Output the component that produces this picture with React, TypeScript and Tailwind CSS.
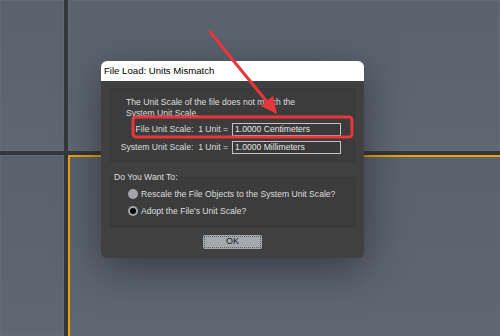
import React from 'react';

const font = { fontFamily: '"Liberation Sans", Arial, sans-serif' };

const Viewport = ({ active = false }: { active?: boolean }) => (
  <div
    className={
      'bg-gradient-to-b from-[#5a626d] to-[#5f6773] ' +
      (active ? 'border-l-2 border-t-2 border-[#eea10c]' : 'border border-[#636b76]')
    }
  />
);

const UnitRow = ({ label, value }: { label: string; value: string }) => (
  <div className="flex h-[13px] items-center">
    <span className="w-[117px] text-right whitespace-pre">{label}</span>
    <div className="ml-[4px] flex h-[13px] w-[109px] items-center border border-[#c4c4c4] bg-[#393939] pl-[2px] text-[#e6e6e6]">
      {value}
    </div>
  </div>
);

const Radio = ({ checked, label }: { checked: boolean; label: string }) => (
  <div className="flex h-[12px] items-center">
    {checked ? (
      <span className="flex h-[10px] w-[10px] items-center justify-center rounded-full bg-[#a2a4a7]">
        <span className="h-[6px] w-[6px] rounded-full bg-black" />
      </span>
    ) : (
      <span className="h-[10px] w-[10px] rounded-full bg-[#a2a4a7]" />
    )}
    <span className="ml-[3px] whitespace-nowrap">{label}</span>
  </div>
);

const Dialog = () => (
  <div
    className="absolute left-[101px] top-[61px] w-[263px] rounded-[6px] bg-[#404040] text-[8.6px] text-[#dedede] shadow-[0_10px_40px_rgba(20,24,30,0.55)]"
    style={font}
  >
    <div className="flex h-[20px] items-center rounded-t-[6px] bg-white px-[3px] text-[9.6px] text-black">
      File Load: Units Mismatch
    </div>
    <div className="px-[9px] pb-[9px] pt-[7px]">
      <div className="border border-[#383838] bg-[#3c3c3c] pb-[7px] pt-[8px]">
        <p className="pl-[15px] leading-[10.5px]">
          The Unit Scale of the file does not match the
          <br />
          System Unit Scale.
        </p>
        <div className="mt-[5px] flex flex-col gap-[5px]">
          <UnitRow label="File Unit Scale:  1 Unit =" value="1.0000 Centimeters" />
          <UnitRow label="System Unit Scale:  1 Unit =" value="1.0000 Millimeters" />
        </div>
      </div>
      <fieldset className="mt-[10px] border border-[#383838] bg-[#3c3c3c] pb-[9px] pl-[17px]">
        <legend className="-ml-[15px] px-[1px] leading-[10px]">Do You Want To:</legend>
        <div className="mt-[6px] flex flex-col gap-[5px]">
          <Radio checked={false} label="Rescale the File Objects to the System Unit Scale?" />
          <Radio checked label="Adopt the File's Unit Scale?" />
        </div>
      </fieldset>
      <div className="mt-[8px] flex justify-center">
        <button className="flex h-[14px] w-[59px] items-center justify-center rounded-[2px] bg-[#a4a9ae] p-[1px] text-[9px] text-[#1a1a1a]">
          <span className="flex h-full w-full items-center justify-center border border-dotted border-[#5a5e62]">
            OK
          </span>
        </button>
      </div>
    </div>
  </div>
);

const Annotation = () => (
  <svg className="pointer-events-none absolute left-0 top-0" width={500} height={336}>
    <rect x={133} y={117} width={219} height={20} rx={3} fill="none" stroke="#e8363c" strokeWidth={3} />
    <line x1={210} y1={32} x2={268} y2={103} stroke="#e8363c" strokeWidth={3} strokeLinecap="round" />
    <polygon points="277,114 261,106 273,96" fill="#e8363c" />
  </svg>
);

export default function App() {
  return (
    <div className="relative h-[336px] w-[500px] overflow-hidden bg-[#34373b]">
      <div className="grid h-full w-full grid-cols-[64px_1fr] grid-rows-[151px_1fr] gap-[4px]">
        <Viewport />
        <Viewport />
        <Viewport />
        <Viewport active />
      </div>
      <Dialog />
      <Annotation />
    </div>
  );
}
